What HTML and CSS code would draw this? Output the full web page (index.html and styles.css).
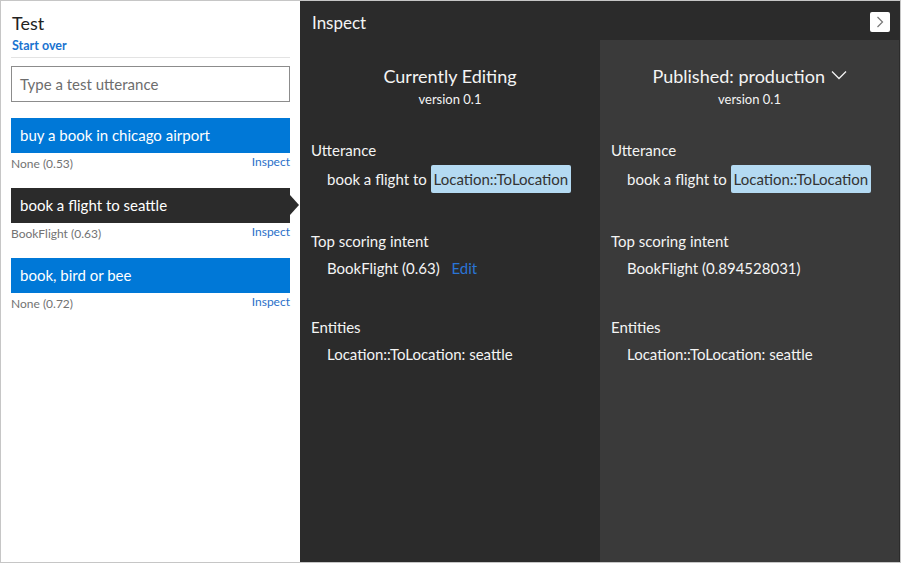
FILE: index.html
```html
<!DOCTYPE html>
<html>
<head>
<meta charset="utf-8">
<link rel="stylesheet" href="styles.css">
</head>
<body>
<div class="app">
  <aside class="test">
    <h1 class="test-title">Test</h1>
    <a class="start-over">Start over</a>
    <hr class="divider">
    <div class="input">Type a test utterance</div>
    <ul class="utterances">
      <li class="utt">
        <div class="utt-bar">buy a book in chicago airport</div>
        <div class="utt-meta"><span class="score">None (0.53)</span><a class="inspect-link">Inspect</a></div>
      </li>
      <li class="utt selected">
        <div class="utt-bar">book a flight to seattle</div>
        <div class="utt-meta"><span class="score">BookFlight (0.63)</span><a class="inspect-link">Inspect</a></div>
      </li>
      <li class="utt">
        <div class="utt-bar">book, bird or bee</div>
        <div class="utt-meta"><span class="score">None (0.72)</span><a class="inspect-link">Inspect</a></div>
      </li>
    </ul>
  </aside>
  <section class="inspect">
    <header class="inspect-head">
      <span class="inspect-title">Inspect</span>
      <button class="close-btn"><svg width="10" height="12" viewBox="0 0 10 12"><path d="M2.5 1 L7.5 6 L2.5 11" fill="none" stroke="#777" stroke-width="1.2"/></svg></button>
    </header>
    <div class="columns">
      <div class="col editing">
        <div class="col-head">
          <div class="col-title">Currently Editing</div>
          <div class="col-version">version 0.1</div>
        </div>
        <div class="field field-utt">
          <div class="label">Utterance</div>
          <div class="value">book a flight to <span class="entity">Location::ToLocation</span></div>
        </div>
        <div class="field field-intent">
          <div class="label">Top scoring intent</div>
          <div class="value">BookFlight (0.63) <a class="edit">Edit</a></div>
        </div>
        <div class="field">
          <div class="label">Entities</div>
          <div class="value">Location::ToLocation: seattle</div>
        </div>
      </div>
      <div class="col published">
        <div class="col-head">
          <div class="col-title">Published: production <svg class="chev" width="16" height="10" viewBox="0 0 16 10"><path d="M1 1.5 L8 8.5 L15 1.5" fill="none" stroke="#f2f2f2" stroke-width="1.3"/></svg></div>
          <div class="col-version">version 0.1</div>
        </div>
        <div class="field field-utt">
          <div class="label">Utterance</div>
          <div class="value">book a flight to <span class="entity">Location::ToLocation</span></div>
        </div>
        <div class="field field-intent">
          <div class="label">Top scoring intent</div>
          <div class="value">BookFlight (0.894528031)</div>
        </div>
        <div class="field">
          <div class="label">Entities</div>
          <div class="value">Location::ToLocation: seattle</div>
        </div>
      </div>
    </div>
  </section>
</div>
</body>
</html>
```

FILE: styles.css
```css
* { box-sizing: border-box; }
html, body { margin: 0; padding: 0; }
body {
  font-family: "Lato", "Open Sans", sans-serif;
  background: #fff;
}
.app {
  width: 901px;
  height: 563px;
  border: 1px solid #c6c6c6;
  display: flex;
}
.test {
  width: 299px;
  flex: none;
  padding: 0 10px 0 10px;
  background: #fff;
}
.test-title {
  margin: 0;
  padding-top: 11px;
  padding-left: 1px;
  font-size: 18px;
  font-weight: normal;
  line-height: 22px;
  color: #222;
}
.start-over {
  display: block;
  margin-top: 4px;
  padding-left: 1px;
  font-size: 12.5px;
  font-weight: bold;
  line-height: 16px;
  color: #1a73d0;
}
.divider {
  border: 0;
  border-top: 1px solid #e3e3e3;
  margin: 3px 0 0 0;
}
.input {
  margin-top: 8px;
  height: 36px;
  border: 1px solid #8c8c8c;
  padding: 0 8px;
  font-size: 15px;
  line-height: 34px;
  color: #6d6d6d;
}
.utterances {
  list-style: none;
  margin: 16px 0 0 0;
  padding: 0;
}
.utt {
  height: 70px;
}
.utt-bar {
  position: relative;
  height: 35px;
  background: #0078d7;
  color: #fff;
  font-size: 15px;
  line-height: 35px;
  padding-left: 9px;
}
.utt.selected .utt-bar {
  background: #2b2b2b;
}
.utt.selected .utt-bar::after {
  content: "";
  position: absolute;
  right: -9px;
  top: 7px;
  border-left: 9px solid #2b2b2b;
  border-top: 10px solid transparent;
  border-bottom: 10px solid transparent;
}
.utt-meta {
  display: flex;
  justify-content: space-between;
  align-items: flex-start;
  padding-top: 1px;
}
.score {
  font-size: 12px;
  line-height: 16px;
  padding-top: 2px;
  color: #737373;
}
.inspect-link {
  font-size: 12px;
  line-height: 16px;
  color: #2a6fc9;
}
.inspect {
  flex: 1;
  display: flex;
  flex-direction: column;
  background: #2b2b2b;
  color: #f4f4f4;
}
.inspect-head {
  height: 39px;
  flex: none;
  display: flex;
  align-items: center;
  justify-content: space-between;
  padding: 0 10px 0 12px;
}
.inspect-title {
  font-size: 17px;
  line-height: 22px;
  padding-top: 4px;
}
.close-btn {
  width: 20px;
  height: 20px;
  border: 0;
  border-radius: 2px;
  background: #fff;
  padding: 0;
  display: flex;
  align-items: center;
  justify-content: center;
  margin-top: 2px;
}
.columns {
  flex: 1;
  display: flex;
}
.col {
  width: 300px;
  padding: 0 11px;
}
.col.published {
  width: 299px;
  background: #3a3a3a;
}
.col-head {
  text-align: center;
  padding-top: 24px;
  height: 100px;
}
.col-title {
  font-size: 18px;
  line-height: 24px;
}
.chev {
  vertical-align: 3px;
  margin-left: 1px;
}
.col-version {
  font-size: 13px;
  line-height: 18px;
  margin-top: 2px;
}
.field {
  height: 86px;
}
.field-utt { height: 91px; }
.label {
  font-size: 15px;
  line-height: 20px;
}
.value {
  margin-top: 3px;
  padding-left: 16px;
  font-size: 15px;
  line-height: 28px;
}
.field-utt .value {
  margin-top: 5px;
}
.entity {
  display: inline-block;
  background: #b4daf2;
  color: #333;
  padding: 0 3px;
  border-radius: 2px;
  line-height: 28px;
}
.edit {
  color: #2a74d6;
  margin-left: 8px;
}
```
